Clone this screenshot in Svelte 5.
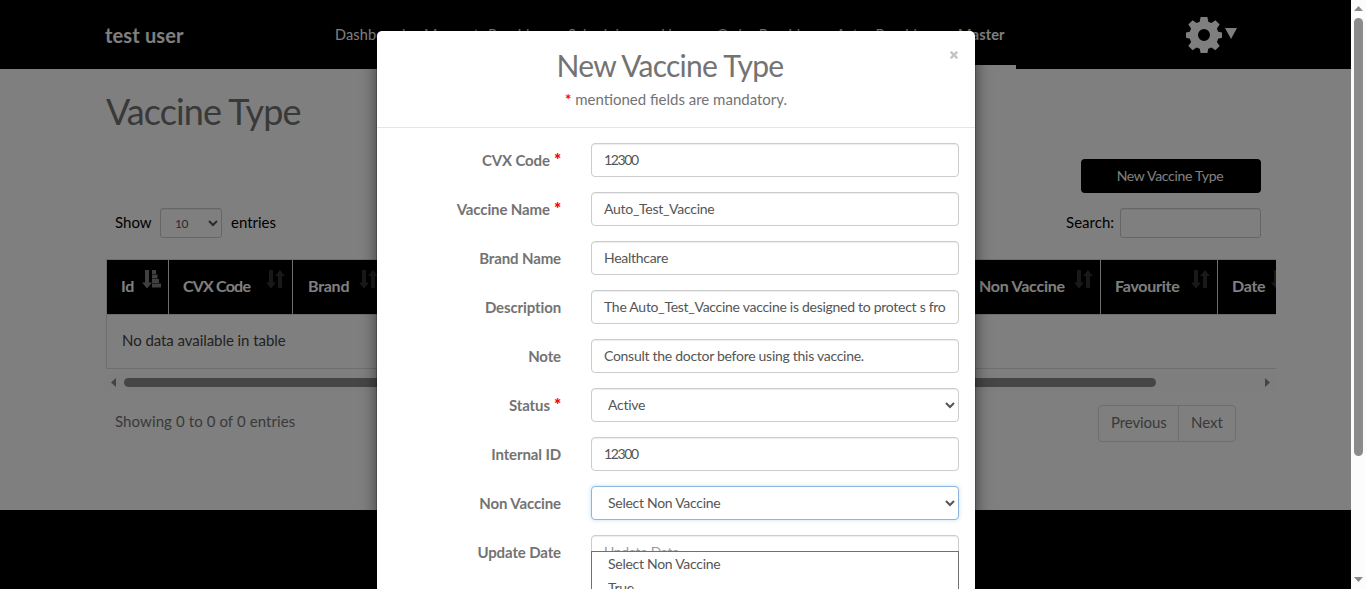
<script>
  const nav = [
    { label: 'Dashboard', width: 89 },
    { label: 'Moment', width: 64 },
    { label: 'Provider', width: 80 },
    { label: 'Scheduler', width: 93 },
    { label: 'Home', width: 56 },
    { label: 'Order Provider', width: 119 },
    { label: 'Actor Provider', width: 122 }
  ];
  const fields = [
    { label: 'CVX Code', required: true, value: '12300', numeric: true },
    { label: 'Vaccine Name', required: true, value: 'Auto_Test_Vaccine' },
    { label: 'Brand Name', value: 'Healthcare' },
    { label: 'Description', value: 'The Auto_Test_Vaccine vaccine is designed to protect s from disease' },
    { label: 'Note', value: 'Consult the doctor before using this vaccine.' },
    { label: 'Status', required: true, options: ['Active'] },
    { label: 'Internal ID', value: '12300', numeric: true },
    { label: 'Non Vaccine', options: ['Select Non Vaccine', 'True'], open: true },
    { label: 'Update Date', placeholder: 'Update Date', value: '' }
  ];
</script>

{#snippet sortIcon()}
  <svg class="sort" width="19" height="19" viewBox="0 0 19 19"><path d="M3 0h4v12.500h3L5 18.500 0 12.500h3zM12 18V6H9l5-6 5 6h-3v12z" /></svg>
{/snippet}

<div class="window">
  <div class="page">
    <header>
      <div class="brand">test user</div>
      <nav>
        {#each nav as item}
          <span style="width: {item.width}px">{item.label}</span>
        {/each}
        <span class="current">Master</span>
      </nav>
      <div class="settings">
        <svg width="36" height="36" viewBox="0 0 36 36"><path fill="#fff" fill-rule="evenodd" d="M14.6 0h6.8l.9 4.8 3.1 1.3 4-2.8 4.3 4.3-2.8 4 1.3 3.1 3.8.9v5.2l-3.8.9-1.3 3.3 2.8 4-4.3 4.3-4-2.8-3.1 1.3-.9 4.2h-6.8l-.9-4.2-3.1-1.3-4 2.8L2.3 29l2.8-4-1.3-3.3-3.8-.9v-5.2l3.8-.9 1.3-3.1-2.8-4 4.3-4.3 4 2.8 3.1-1.3zM18 12a6 6 0 1 0 0 12 6 6 0 0 0 0-12z" /></svg>
        <svg width="12" height="11" viewBox="0 0 12 11"><path fill="#fff" d="M0 0h12L6 11z" /></svg>
      </div>
    </header>
    <main>
      <h1>Vaccine Type</h1>
      <div class="actions"><button class="create">New Vaccine Type</button></div>
      <div class="tools">
        <span class="show">Show</span>
        <select><option>10</option></select>
        <span class="entries">entries</span>
        <span class="search">Search:</span>
        <input type="text" />
      </div>
      <div class="table">
        <div class="thead">
          <div class="c-id">Id
            <svg class="sort on" width="19" height="19" viewBox="0 0 19 19"><path d="M3 0h4v12.500h3L5 18.500 0 12.500h3zM10 0h4v4h-4zM10 4.500h5.500v4H10zM10 9h7v4h-7zM10 13.500h9v4h-9z" /></svg>
          </div>
          <div class="c-cvx">CVX Code{@render sortIcon()}</div>
          <div class="c-brand">Brand{@render sortIcon()}</div>
          <div class="c-fill"></div>
          <div class="c-non">Non Vaccine{@render sortIcon()}</div>
          <div class="c-fav">Favourite{@render sortIcon()}</div>
          <div class="c-date">Date{@render sortIcon()}</div>
        </div>
        <div class="empty">No data available in table</div>
      </div>
      <div class="hscroll">
        <svg width="5" height="9" viewBox="0 0 5 9"><path d="M5 0v9L0 4.500z" /></svg>
        <i></i>
        <svg width="5" height="9" viewBox="0 0 5 9"><path d="M0 0v9l5-4.500z" /></svg>
      </div>
      <div class="foot">
        <span class="info">Showing 0 to 0 of 0 entries</span>
        <div class="pager"><span class="prev">Previous</span><span>Next</span></div>
      </div>
    </main>
  </div>
  <aside class="vscroll">
    <svg width="9" height="5" viewBox="0 0 9 5"><path d="M0 5h9L4.500 0z" /></svg>
    <i></i>
    <svg width="9" height="5" viewBox="0 0 9 5"><path d="M0 0h9L4.500 5z" /></svg>
  </aside>
  <div class="backdrop">
    <div class="modal">
      <div class="mhead">
        <svg class="close" width="8" height="8" viewBox="0 0 8 8"><path d="M.7.7l6.600 6.600M7.300.7L.7 7.300" stroke="#c4c4c4" stroke-width="2.400" /></svg>
        <h2>New Vaccine Type</h2>
        <p><b>*</b> mentioned fields are mandatory.</p>
      </div>
      <form>
        {#each fields as f}
          <div class="row">
            <div class="label">{f.label}{#if f.required}<b>*</b>{/if}</div>
            {#if f.options}
              <select class:focus={f.open}>
                {#each f.options as o}<option>{o}</option>{/each}
              </select>
            {:else}
              <input type="text" class:numeric={f.numeric} value={f.value} placeholder={f.placeholder} />
            {/if}
            {#if f.open}
              <div class="menu">
                {#each f.options as o}<div>{o}</div>{/each}
              </div>
            {/if}
          </div>
        {/each}
      </form>
    </div>
  </div>
</div>

<style>
  * { box-sizing: border-box; }
  .window { position: relative; display: flex; width: 1366px; height: 589px; overflow: hidden; font-family: Lato, sans-serif; font-size: 15px; color: #737373; }
  .page { width: 1351px; background: #000; }
  header { height: 69px; display: flex; background: #000; color: #fff; }
  .brand { width: 335px; padding: 23px 0 0 105px; font-size: 20px; font-weight: 700; line-height: 24px; letter-spacing: .15px; }
  nav { display: flex; width: 681px; height: 69px; line-height: 20px; white-space: nowrap; }
  nav span { padding-top: 25px; font-size: 14.5px; flex: none; letter-spacing: .15px; }
  nav .current { width: 58px; font-weight: 700; border-bottom: 4px solid #fff; }
  .settings { margin-left: 170px; padding-top: 17px; display: flex; gap: 3px; }
  .settings svg:last-child { margin-top: 11px; }
  main { background: #fff; height: 441px; padding: 0 75px 0 106px; overflow: hidden; }
  h1 { margin: 20px 0 0; height: 46px; font-size: 36px; line-height: 44px; font-weight: 400; letter-spacing: -.9px; }
  .actions { margin-top: 24px; display: flex; justify-content: flex-end; padding-right: 15px; }
  .create { width: 180px; height: 34px; border: 0; border-radius: 4px; background: #000; color: #fff; font: 14px Lato, sans-serif; letter-spacing: -.3px; padding: 0 2px 1px 0; }
  .tools { margin-top: 15px; height: 30px; display: flex; align-items: center; color: #000; padding: 0 15px 0 9px; }
  .tools span { padding-bottom: 2px; }
  .show { width: 45px; }
  select, input { border: 1px solid #ccc; border-radius: 4px; background: #fff; color: #555; font: 14px Lato, sans-serif; outline: 0; box-shadow: inset 0 1px 1px rgba(0, 0, 0, .075); }
  .tools select { width: 62px; height: 30px; padding: 5px 10px; font-size: 12px; border-radius: 3px; letter-spacing: -.5px; }
  .entries { margin-left: 9px; }
  .search { margin-left: auto; margin-right: 6px; }
  .tools input { width: 141px; height: 30px; border-radius: 3px; }
  .table { margin-top: 21px; width: 1170px; height: 110px; border: 1px solid #ddd; border-right: 0; }
  .thead { height: 54px; display: flex; overflow: hidden; background: #000; color: #fff; font-size: 16px; line-height: 52px; font-weight: 700; letter-spacing: -.25px; }
  .thead > div { display: flex; padding-left: 14px; border-right: 1px solid #ddd; flex: none; justify-content: space-between; white-space: nowrap; }
  .thead .c-id { width: 62px; padding-right: 7px; }
  .c-cvx { width: 124px; padding-right: 7px; letter-spacing: -.8px; }
  .thead .c-brand { width: 93px; padding-left: 15px; padding-right: 7px; }
  .thead .c-fill { width: 579px; border: 0; padding: 0; }
  .c-non { width: 136px; padding-right: 7px; }
  .c-fav { width: 117px; padding-right: 7px; }
  .c-date { width: 80px; padding-right: 7px; }
  .sort { margin-top: 10px; fill: #333; flex: none; }
  .sort.on { fill: #808080; }
  .empty { border-top: 1px solid #ddd; height: 54px; padding-left: 15px; line-height: 51px; color: #444; letter-spacing: -.06px; }
  .hscroll { height: 17px; margin-top: 5px; padding: 0 6px 0 5px; width: 1170px; display: flex; align-items: center; fill: #888; background: #fcfcfc; }
  .hscroll i { height: 9px; width: 1032px; margin-left: 8px; margin-right: auto; border-radius: 5px; background: #8b8b8b; }
  .foot { display: flex; justify-content: space-between; margin-top: 14px; padding: 0 40px 0 9px; }
  .info { line-height: 33px; letter-spacing: .1px; }
  .pager { display: flex; height: 37px; width: 138px; border: 1px solid #ddd; border-radius: 4px; line-height: 33px; }
  .pager span { padding-left: 12px; }
  .pager .prev { width: 80px; border-right: 1px solid #ddd; letter-spacing: -.1px; }
  .vscroll { position: relative; z-index: 2; width: 15px; background: #fcfcfc; display: flex; flex-direction: column; align-items: center; padding: 6px 0 7px; fill: #8b8b8b; }
  .vscroll i { width: 9px; height: 438px; border-radius: 5px; background: #8b8b8b; margin: 7px 0 auto; }
  .backdrop { position: absolute; inset: 0 15px 0 0; background: rgba(0, 0, 0, .5); overflow: hidden; }
  .modal { width: 600px; margin: 30px 0 0 376px; height: 620px; border: 1px solid rgba(0, 0, 0, .2); background: #fff; background-clip: padding-box; border-radius: 6px; box-shadow: 0 5px 15px rgba(0, 0, 0, .5); }
  .mhead { position: relative; height: 97px; border-bottom: 1px solid #e5e5e5; text-align: center; padding-top: 16px; }
  .close { position: absolute; right: 17px; top: 20px; }
  h2 { margin: 0; padding-right: 12px; font-size: 30px; line-height: 36px; font-weight: 400; letter-spacing: -.75px; }
  p { margin: 6px 0 0; line-height: 20px; }
  b { color: red; }
  form { padding: 15px 16px; }
  .row { position: relative; display: flex; height: 34px; margin-bottom: 15px; }
  .label { width: 198px; padding-right: 30px; text-align: right; line-height: 34px; font-weight: 700; letter-spacing: -.12px; }
  .label b { margin-left: 4px; font-size: 17px; line-height: 20px; }
  .row input, .row select { width: 368px; height: 34px; padding: 5px 12px 7px; letter-spacing: -.28px; }
  .row .numeric { letter-spacing: -1.4px; }
  .row .focus { border-color: #8fb5dd; box-shadow: 0 0 4px rgba(102, 175, 233, .4); }
  input::placeholder { color: #999; opacity: 1; }
  .menu { position: absolute; z-index: 3; left: 198px; top: 65px; width: 368px; border: 1px solid #707070; background: #fff; color: #555; font-size: 14px; line-height: 24px; height: 60px; padding: 0 16px; letter-spacing: -.28px; }
</style>
